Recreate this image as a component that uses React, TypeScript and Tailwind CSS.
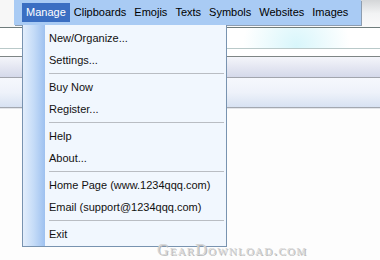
import React from 'react'

const menus = ['Manage', 'Clipboards', 'Emojis', 'Texts', 'Symbols', 'Websites', 'Images']

type Entry = { label: string } | { sep: true }

const items: Entry[] = [
  { label: 'New/Organize...' },
  { label: 'Settings...' },
  { sep: true },
  { label: 'Buy Now' },
  { label: 'Register...' },
  { sep: true },
  { label: 'Help' },
  { label: 'About...' },
  { sep: true },
  { label: 'Home Page (www.1234qqq.com)' },
  { label: 'Email (support@1234qqq.com)' },
  { sep: true },
  { label: 'Exit' },
]

function MenuBar() {
  return (
    <div className="flex h-[25px] w-[347px] items-center bg-[#a9cbf4] pl-[8px] shadow-[1px_1px_0_#8d9db0]">
      {menus.map((m, i) => (
        <div
          key={m}
          className={
            i === 0
              ? 'flex h-[19px] items-center bg-[#3a6ec2] px-[4px] text-white'
              : 'flex h-[19px] items-center px-[4px] text-black'
          }
        >
          {m}
        </div>
      ))}
    </div>
  )
}

function Dropdown() {
  return (
    <div className="absolute left-[22px] top-[25px] flex h-[222px] w-[205px] border border-t-0 border-[#7893b0] bg-[#f1f7fe]">
      <div className="w-[22px] shrink-0 bg-gradient-to-r from-[#e3eefc] via-[#c4dbf7] to-[#9ec1f0]" />
      <div className="flex flex-1 flex-col pt-[2px] pr-[2px]">
        {items.map((it, i) =>
          'sep' in it ? (
            <div key={i} className="flex h-[5px] items-center pl-[4px]">
              <div className="h-px w-full bg-[#b9bdc3]" />
            </div>
          ) : (
            <div key={i} className="flex h-[22px] items-center pl-[4px] text-[#111]">
              {it.label}
            </div>
          )
        )}
      </div>
    </div>
  )
}

export default function App() {
  return (
    <div
      className="relative h-[260px] w-[380px] overflow-hidden bg-[#fdfdfd] text-[11px]"
      style={{ fontFamily: '"Liberation Sans", Arial, sans-serif' }}
    >
      <div className="flex h-[27px] bg-gradient-to-b from-[#d4d6d8] via-[#f2f3f4] to-[#fafafa]">
        <div className="w-[14px] bg-[#f7f7f7]" />
        <MenuBar />
      </div>
      <div className="h-px bg-[#6f7c7c]" />
      <div className="h-[20px] bg-[radial-gradient(circle_at_78%_90%,#d8f6fb_0,#ffffff_18%)]" />
      <div className="h-px bg-[#b9c9c9]" />
      <div className="h-[7px] bg-white" />
      <div className="h-px bg-[#7e8585]" />
      <div className="h-[20px] bg-gradient-to-b from-[#f4f5fa] to-[#d5d9ea]" />
      <div className="h-px bg-[#a2a5ad]" />
      <div className="h-[29px] bg-gradient-to-b from-[#f6f8fd] via-[#eef2fa] to-[#d8e2f2]" />
      <div className="h-px bg-[#a3a8b0]" />
      <div className="h-px bg-[#e4e6ea]" />

      <Dropdown />

      <div
        className="absolute left-[157px] top-[242px] text-[16px] leading-none tracking-[1.2px] text-[#d4d4d4] [font-variant:small-caps] [text-shadow:1px_1px_0_#b8b8b8]"
        style={{ fontFamily: '"Liberation Serif", "Times New Roman", serif' }}
      >
        GearDownload.com
      </div>
    </div>
  )
}
